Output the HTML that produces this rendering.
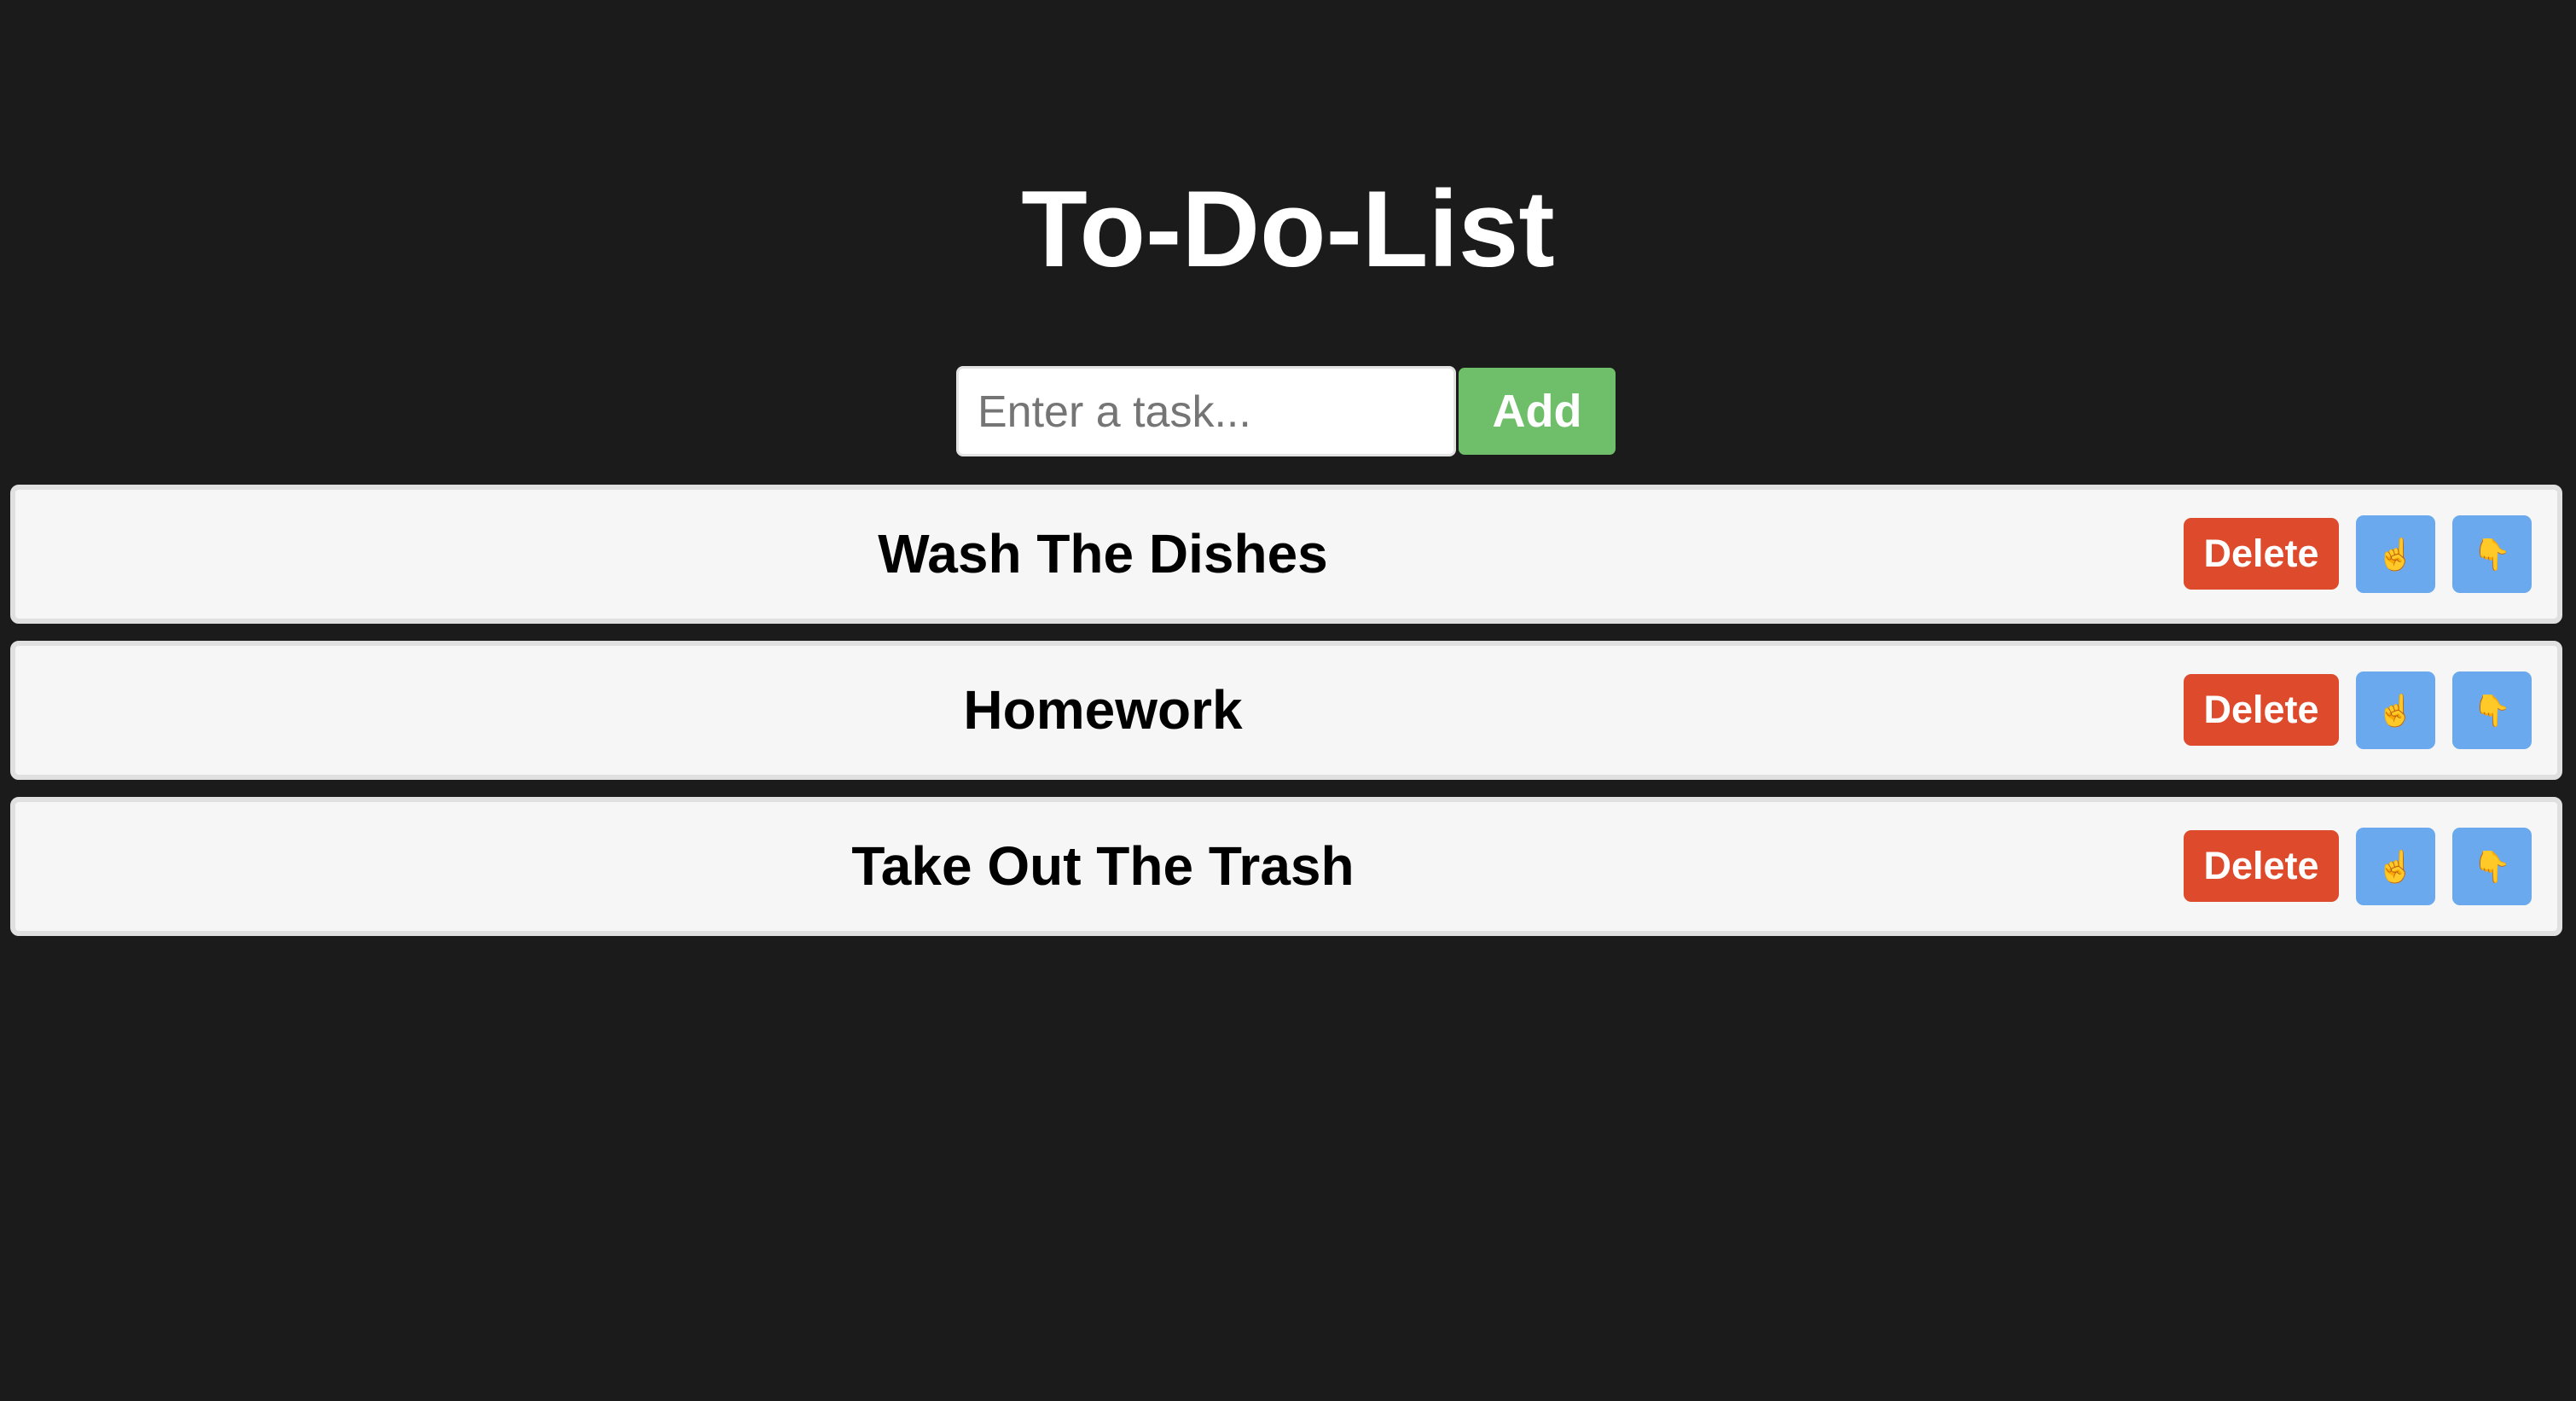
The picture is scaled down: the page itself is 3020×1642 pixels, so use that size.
<!DOCTYPE html>
<html><head><meta charset="utf-8"><style>
html,body{margin:0;padding:0;width:3020px;height:1642px;background:#1b1b1b;overflow:hidden;font-family:"Liberation Sans",Arial,sans-serif}
h1{position:absolute;left:0;top:178px;width:3020px;margin:0;text-align:center;color:#fff;font-size:127px;font-weight:bold;line-height:180px}
.inp{position:absolute;left:1121px;top:429px;width:580px;height:100px;background:#fff;border:3px solid #e3e3e3;border-radius:8px;box-sizing:content-box}
.inp span{position:absolute;left:22px;top:1px;line-height:100px;font-size:52px;color:#757575}
.add{position:absolute;left:1710px;top:431px;width:184px;height:102px;background:#6fbf6a;border-radius:7px;color:#fff;font-weight:bold;font-size:54px;text-align:center;line-height:102px}
.item{position:absolute;left:12px;width:2980px;height:151px;background:#f6f6f6;border:6px solid #e0e0e0;border-radius:10px}
.item .t{position:absolute;left:0;width:2550px;text-align:center;top:0;line-height:151px;font-size:64px;font-weight:bold;color:#000}
.del{position:absolute;left:2542px;top:33px;width:182px;height:84px;background:#de4a2c;border-radius:9px;color:#fff;font-weight:bold;font-size:45px;text-align:center;line-height:84px}
.b{position:absolute;top:30px;width:93px;height:91px;background:#6aa9ee;border-radius:9px;text-align:center;line-height:91px;font-size:36px;color:#f2c04a}
</style></head><body>
<h1>To-Do-List</h1>
<div class="inp"><span>Enter a task...</span></div>
<div class="add">Add</div>
<div class="item" style="top:568px"><div class="t">Wash The Dishes</div><div class="del">Delete</div><div class="b" style="left:2744px">☝</div><div class="b" style="left:2857px">👇</div></div>
<div class="item" style="top:751px"><div class="t">Homework</div><div class="del">Delete</div><div class="b" style="left:2744px">☝</div><div class="b" style="left:2857px">👇</div></div>
<div class="item" style="top:934px"><div class="t">Take Out The Trash</div><div class="del">Delete</div><div class="b" style="left:2744px">☝</div><div class="b" style="left:2857px">👇</div></div>
</body></html>
